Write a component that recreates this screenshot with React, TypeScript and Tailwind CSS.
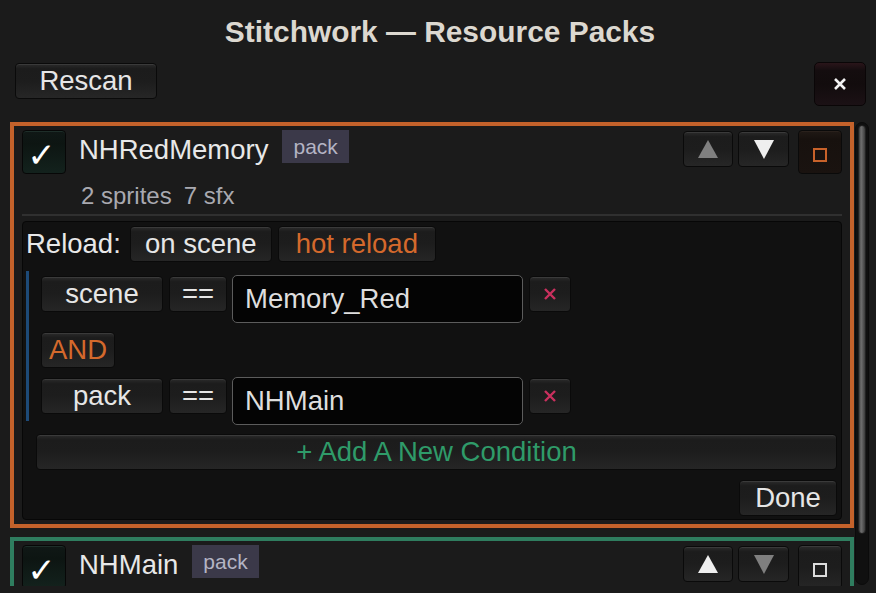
import React from "react";

const BTN =
  "flex items-center justify-center rounded-[4px] border border-[#0a0a0a] bg-[linear-gradient(to_bottom,#2b2b2b_0%,#1c1c1c_14%,#1d1d1d_50%,#262626_100%)] shadow-[inset_0_1px_0_#3a3a3a] leading-none";
const WHITE = "text-[#e6e6e6]";
const ORANGE = "text-[#d4692c]";

function Up({ on }: { on: boolean }) {
  return (
    <svg width="20" height="18" viewBox="0 0 20 18">
      <polygon points="10,0 20,18 0,18" fill={on ? "#efefef" : "#7f7f7f"} />
    </svg>
  );
}
function Down({ on }: { on: boolean }) {
  return (
    <svg width="20" height="19" viewBox="0 0 20 19">
      <polygon points="0,0 20,0 10,19" fill={on ? "#efefef" : "#7f7f7f"} />
    </svg>
  );
}
function XIcon({ color, size = 12, w = 2.4 }: { color: string; size?: number; w?: number }) {
  return (
    <svg width={size} height={size} viewBox="0 0 12 12">
      <path d="M1 1 L11 11 M11 1 L1 11" stroke={color} strokeWidth={w} strokeLinecap="butt" />
    </svg>
  );
}

function CardHeader({
  name,
  upOn,
  downOn,
  accent,
}: {
  name: string;
  upOn: boolean;
  downOn: boolean;
  accent: "orange" | "white";
}) {
  return (
    <div className="flex items-start">
      <div className="flex h-[44px] w-[44px] items-center justify-center rounded-[4px] border border-[#070707] bg-[linear-gradient(to_bottom,#101816_0%,#0d1512_30%,#13221d_100%)] shadow-[inset_0_1px_0_#1e2e29]">
        <span className="mt-[6px] mr-[5px] text-[34px] leading-none text-white" style={{ fontFamily: '"DejaVu Sans", sans-serif' }}>
          ✓
        </span>
      </div>
      <div className="ml-[13px] mt-[2px] h-[36px] text-[27.5px] leading-[36px] text-[#e8e8e8]">{name}</div>
      <div className="ml-[14px] flex h-[33px] items-center bg-[#3b3949] px-[11px] text-[21px] text-[#b4b4c4]">pack</div>
      <div className="flex-1" />
      <div className={`${BTN} mt-[1px] h-[36px] w-[50px]`}>
        <Up on={upOn} />
      </div>
      <div className={`${BTN} ml-[5px] mt-[1px] h-[36px] w-[51px]`}>
        <Down on={downOn} />
      </div>
      {accent === "orange" ? (
        <div className="ml-[9px] flex h-[44px] w-[44px] items-center justify-center rounded-[4px] border border-[#0a0a0a] bg-[linear-gradient(to_bottom,#201915_0%,#17110e_20%,#1a1310_100%)] shadow-[inset_0_1px_0_#2a211c]">
          <div className="mt-[6px] h-[14px] w-[14px] border-2 border-[#c8622a]" />
        </div>
      ) : (
        <div className={`${BTN} ml-[9px] h-[44px] w-[44px]`}>
          <div className="mt-[6px] h-[14px] w-[14px] border-2 border-[#dcdcdc]" />
        </div>
      )}
    </div>
  );
}

function CondRow({ field, value }: { field: string; value: string }) {
  return (
    <div className="flex items-start">
      <div className={`${BTN} ${WHITE} mt-[1px] h-[36px] w-[122px] text-[27.5px]`}>{field}</div>
      <div className={`${BTN} ${WHITE} ml-[6px] mt-[1px] h-[36px] w-[58px] text-[27.5px]`}>==</div>
      <div className="ml-[5px] flex h-[48px] w-[291px] items-center rounded-[5px] border border-[#5c5c5c] bg-[#040404] pl-[12px] text-[27.5px] text-[#dedede]">
        {value}
      </div>
      <div className={`${BTN} ml-[6px] mt-[1px] h-[36px] w-[42px]`}>
        <XIcon color="#c9305e" />
      </div>
    </div>
  );
}

export default function App() {
  return (
    <div
      className="flex h-[593px] w-[876px] flex-col overflow-hidden bg-[#1b1b1b]"
      style={{ fontFamily: '"Liberation Sans", Arial, sans-serif' }}
    >
      <div className="flex h-[62px] justify-center pt-[14px]">
        <div className="ml-[4px] text-[29.9px] font-bold leading-[36px] text-[#dcd8d0]">Stitchwork — Resource Packs</div>
      </div>

      <div className="flex h-[44px] items-start justify-between pl-[15px] pr-[10px]">
        <div className={`${BTN} ${WHITE} mt-[1px] h-[36px] w-[142px] text-[27.5px]`}>Rescan</div>
        <div className="flex h-[44px] w-[52px] items-center justify-center rounded-[5px] border border-[#0a0607] bg-[linear-gradient(to_bottom,#2a151a_0%,#140d0f_18%,#120c0d_50%,#1b1115_100%)]">
          <XIcon color="#f2f2f2" size={12} w={2.6} />
        </div>
      </div>

      <div className="mt-[16px] flex h-[464px] pl-[10px]">
        <div className="flex w-[844px] flex-col gap-[9px] overflow-hidden">
          {/* Orange card */}
          <div className="shrink-0 border-4 border-[#c4622b] px-[8px] pb-[4px] pt-[4px]">
            <CardHeader name="NHRedMemory" upOn={false} downOn={true} accent="orange" />
            <div className="ml-[59px] mt-[8px] h-[28px] text-[24px] leading-[28px] text-[#a9a9b0]">
              2 sprites<span className="ml-[12px]">7 sfx</span>
            </div>
            <div className="mt-[4px] h-[2px] bg-[#303030]" />
            <div className="mt-[5px] rounded-[4px] border border-[#070707] bg-[#111111] pb-[3px] pl-[3px] pr-[4px] pt-[4px]">
              <div className="flex items-center">
                <div className="text-[27.5px] leading-[36px] text-[#e8e8e8]">Reload:</div>
                <div className={`${BTN} ${WHITE} ml-[9px] h-[36px] w-[142px] text-[27.5px]`}>on scene</div>
                <div className={`${BTN} ${ORANGE} ml-[6px] h-[36px] w-[158px] text-[27.5px]`}>hot reload</div>
              </div>
              <div className="mt-[9px] flex items-start">
                <div className="h-[150px] w-[3px] bg-[#1d4a78]" />
                <div className="ml-[12px] mt-[4px] flex flex-col">
                  <CondRow field="scene" value="Memory_Red" />
                  <div className={`${BTN} ${ORANGE} mt-[9px] h-[36px] w-[74px] text-[27.5px]`}>AND</div>
                  <div className="mt-[9px]">
                    <CondRow field="pack" value="NHMain" />
                  </div>
                </div>
              </div>
              <div className={`${BTN} ml-[10px] mt-[9px] h-[36px] text-[27.5px] text-[#2f9b69]`}>+ Add A New Condition</div>
              <div className="mt-[10px] flex justify-end">
                <div className={`${BTN} ${WHITE} h-[36px] w-[98px] text-[27.5px]`}>Done</div>
              </div>
            </div>
          </div>

          {/* Green card */}
          <div className="shrink-0 border-4 border-[#2f7d5f] px-[8px] pb-[4px] pt-[4px]">
            <CardHeader name="NHMain" upOn={true} downOn={false} accent="white" />
            <div className="h-[40px]" />
          </div>
        </div>

        <div className="ml-[1px] mt-0 h-[463px] w-[14px] rounded-full border border-[#0b0b0b] bg-[#101010] p-[2px]">
          <div className="h-[409px] w-full rounded-full border border-[#222] bg-[linear-gradient(to_right,#3a3a3a_0%,#707070_35%,#5a5a5a_65%,#3a3a3a_100%)]" />
        </div>
      </div>
    </div>
  );
}
